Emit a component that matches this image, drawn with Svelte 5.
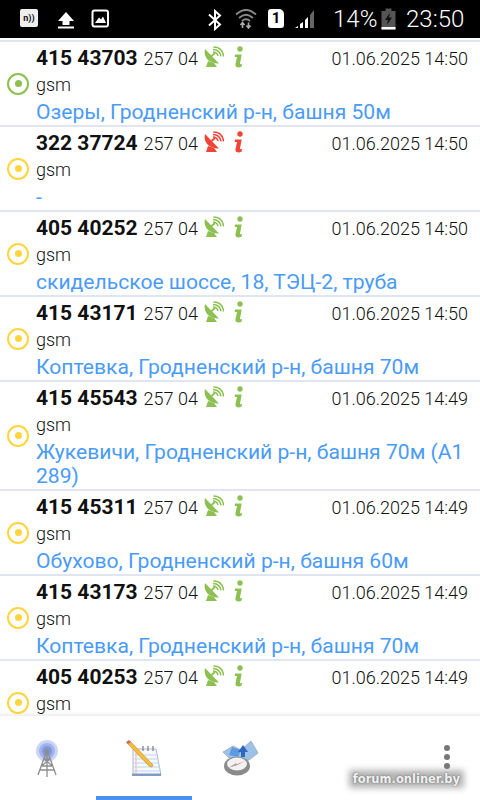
<script>
  const rows = [
    { id: '415 43703', time: '14:50', place: 'Озеры, Гродненский р-н, башня 50м', active: true },
    { id: '322 37724', time: '14:50', place: '-', bad: true },
    { id: '405 40252', time: '14:50', place: 'скидельское шоссе, 18, ТЭЦ-2, труба' },
    { id: '415 43171', time: '14:50', place: 'Коптевка, Гродненский р-н, башня 70м' },
    { id: '415 45543', time: '14:49', place: 'Жукевичи, Гродненский р-н, башня 70м (А1 289)' },
    { id: '415 45311', time: '14:49', place: 'Обухово, Гродненский р-н, башня 60м' },
    { id: '415 43173', time: '14:49', place: 'Коптевка, Гродненский р-н, башня 70м' },
    { id: '405 40253', time: '14:49', place: '' }
  ];
</script>

<div class="screen">
  <header class="status">
    <div class="nfc">n))</div>
    <svg class="ic" width="20" height="20" viewBox="0 0 20 20" style="left:56px;top:10px"><path d="M10 2 L2 11 H6.5 V15 H13.5 V11 H18 Z M2 16.5 H18 V18.5 H2 Z" fill="#fff"/></svg>
    <svg class="ic" width="20" height="20" viewBox="0 0 20 20" style="left:91px"><rect x="1.5" y="1.5" width="15.5" height="16" rx="2" fill="none" stroke="#fff" stroke-width="2"/><path d="M4 14 L8 8.5 L10 10.5 L12 7.5 L15 14 Z" fill="#fff"/></svg>
    <svg class="ic" width="16" height="22" viewBox="0 0 16 22" style="left:207px;top:9px"><path d="M2 5.5 L13 15.5 L8 20 V2 L13 6.5 L2 16.5" fill="none" stroke="#fff" stroke-width="2"/></svg>
    <svg class="ic" width="22" height="22" viewBox="0 0 22 22" style="left:235px;top:7px"><path d="M1 7.5 Q11 -1.5 21 7.5 M4 11 Q11 4.5 18 11 M7 14 Q11 10.5 15 14" fill="none" stroke="#8a8a8a" stroke-width="1.8"/><path d="M7.5 21 V16 M5.5 18 L7.5 15.5 L9.5 18 M13.5 15.5 V20.5 M11.5 18.5 L13.5 21 L15.5 18.5" fill="none" stroke="#aaa" stroke-width="1.6"/></svg>
    <div class="sim">1</div>
    <svg class="ic" width="22" height="22" viewBox="0 0 22 22" style="left:294px;top:8px"><path d="M1 20 H4 V18 L1 20 Z" fill="#fff"/><path d="M6 20 H9 V14 L6 16 Z" fill="#fff"/><path d="M11 20 H14 V9 L11 12 Z" fill="#fff"/><path d="M16 20 H20 V2 L16 7 Z" fill="#666"/></svg>
    <span class="pct">14%</span>
    <svg class="ic" width="15" height="22" viewBox="0 0 15 22" style="left:381px;top:8px"><rect x="0.5" y="3" width="14" height="18.5" fill="#555"/><rect x="4.5" y="0.5" width="6" height="3" fill="#555"/><rect x="0.5" y="19" width="14" height="2.5" fill="#fff"/><path d="M9 4.5 L4 12 H7 L6 17 L11 9.5 H8 Z" fill="#111"/></svg>
    <span class="clock">23:50</span>
  </header>

  <main class="list">
    <div class="peek"></div>
    {#each rows as r}
      <section class="row">
        <div class="dot" class:on={r.active}></div>
        <div class="top">
          <b>{r.id}</b>
          <span class="code">257 04</span>
          <svg class="dish" class:red={r.bad} width="20" height="22" viewBox="0 0 20 22">
            <path d="M1 3 C-1 11 5 18 15 17.5 Z" fill="currentColor"/>
            <path d="M4 15 L2 21 H13 L10 17 Z" fill="currentColor"/>
            <path d="M7.5 10 L11 7" stroke="currentColor" stroke-width="1.8"/>
            <path d="M9 6 Q13 6 14 10 M9 3.4 Q16 3.6 17 10.4 M9.4 1 Q18.6 1.2 19.6 10.5" fill="none" stroke="currentColor" stroke-width="1.5"/>
          </svg>
          <svg class="info" class:red={r.bad} width="12" height="22" viewBox="0 0 12 22">
            <circle cx="7" cy="3" r="2.7" fill="currentColor"/>
            <path d="M2 8.5 H8.7 L7 17.5 Q6.8 19 9 17.8 L8.7 20.5 Q6 22 3.5 21 Q2 20.3 2.5 18 L4 11 H1.7 Z" fill="currentColor"/>
          </svg>
          <span class="date">01.06.2025 {r.time}</span>
        </div>
        <div class="type">gsm</div>
        <div class="place">{r.place}</div>
      </section>
    {/each}
  </main>

  <nav class="tabs">
    <div class="tab">
      <svg class="soft" width="26" height="38" viewBox="0 0 26 38">
        <circle cx="12" cy="11" r="11" fill="#ccd6f4"/>
        <circle cx="12" cy="11" r="8" fill="#9fb3ec"/>
        <circle cx="12" cy="11" r="5" fill="#7f97e2"/>
        <circle cx="12" cy="11" r="2.5" fill="#8a8fa8"/>
        <path d="M12 10 L3 35 M12 10 L21 35 M12 10 V37 M6.5 26 L17.5 26 M5 30 L19 30 M9 19 H15 M6.5 26 L15 19 M17.5 26 L9 19" stroke="#8e8e8e" stroke-width="1.3" fill="none"/>
      </svg>
    </div>
    <div class="tab current">
      <svg class="soft" width="38" height="38" viewBox="0 0 38 38">
        <path d="M8 9 L31 9 L36 35 H8 Z" fill="#f6f8fc" stroke="#a8b8d0"/>
        <path d="M9 15 H32 M9 19 H33 M9 23 H34 M9 27 H35 M9 31 H35" stroke="#c2d5ee"/>
        <path d="M11 9 V35" stroke="#f0b8b8"/>
        <path d="M7 33.5 H36 V36 H7 Z" fill="#7e9cc4"/>
        <path d="M18 6 V11 M23 6 V11 M28 6 V11" stroke="#8a8a8a" stroke-width="1.4"/>
        <path d="M2 3 L5 1 L28 25 L27 27 L24 26 Z" fill="#f2bd3a" stroke="#c58a20" stroke-width="0.6"/>
        <path d="M1 2 L4 0 L6 2 L3 4 Z" fill="#d2665a"/>
      </svg>
    </div>
    <div class="tab">
      <svg class="soft" width="38" height="36" viewBox="0 0 38 36">
        <path d="M2 12 L12 6 L20 10 L30 1 L37 13 L28 20 L12 22 Z" fill="#9cc2ea" stroke="#a9b2bf"/>
        <path d="M11 7 L20 10 L17 17 L8 15 Z" fill="#5d9be0"/>
        <path d="M17 12 L22 5 L27 12 L24 12 V17 H20 V12 Z" fill="#2f66c0"/>
        <ellipse cx="16" cy="26" rx="13" ry="9.5" fill="#8b8b8b"/>
        <ellipse cx="16" cy="24" rx="10" ry="6.5" fill="#f2f2f2"/>
        <path d="M8 27.5 L24 21 L16 25 Z" fill="#e2434a"/>
        <path d="M8 27.5 L16 25 L15 23 Z" fill="#aaa"/>
      </svg>
    </div>
    <div class="space"></div>
    <div class="more"><i></i><i></i><i></i></div>
    <div class="mark">forum.onliner.by</div>
  </nav>
</div>

<style>
  :global(body) { margin: 0; background: #fff; }
  .screen {
    width: 480px;
    height: 800px;
    display: flex;
    flex-direction: column;
    overflow: hidden;
    font-family: Roboto, "Liberation Sans", sans-serif;
    color: #111;
  }
  .status {
    position: relative;
    height: 38px;
    flex-shrink: 0;
    background: #000;
    color: #fff;
  }
  .ic { position: absolute; top: 9px; }
  .nfc {
    position: absolute;
    left: 20px;
    top: 9px;
    width: 18px;
    height: 18px;
    background: #eee;
    border-radius: 2px;
    color: #111;
    font-size: 9px;
    font-weight: 700;
    line-height: 18px;
    text-align: center;
  }
  .sim {
    position: absolute;
    left: 268px;
    top: 9px;
    width: 16px;
    height: 19px;
    background: #fff;
    border-radius: 3px 5px 3px 3px;
    color: #000;
    font-size: 15px;
    font-weight: 700;
    line-height: 19px;
    text-align: center;
  }
  .pct {
    position: absolute;
    left: 333px;
    top: 5px;
    font-size: 24px;
    font-weight: 300;
    line-height: 28px;
  }
  .clock {
    position: absolute;
    left: 406px;
    top: 5px;
    font-size: 24px;
    line-height: 28px;
    font-weight: 300;
  }
  .list {
    position: relative;
    flex: 1;
    min-height: 0;
    overflow: hidden;
    background: #fff;
  }
  .list::after {
    content: "";
    position: absolute;
    left: 0;
    right: 0;
    bottom: 0;
    height: 4px;
    background: linear-gradient(rgba(0, 0, 0, 0), rgba(0, 0, 0, 0.07));
  }
  .peek { height: 2px; }
  .row {
    position: relative;
    border-top: 2px solid #dfe5f2;
    padding: 2px 12px 1px 36px;
  }
  .dot {
    position: absolute;
    left: 7px;
    top: 50%;
    margin-top: -11px;
    width: 18px;
    height: 18px;
    border: 2.5px solid #ffd53d;
    border-radius: 50%;
    display: flex;
    align-items: center;
    justify-content: center;
  }
  .dot::after {
    content: "";
    width: 7px;
    height: 7px;
    border-radius: 50%;
    background: #ffd53d;
  }
  .dot.on { border-color: #8cc152; }
  .dot.on::after { background: #8cc152; }
  .top {
    display: flex;
    align-items: center;
    height: 28px;
  }
  b { font-size: 21px; font-weight: 700; }
  .code { font-size: 18px; font-weight: 300; margin-left: 6px; }
  .dish { color: #8cc152; margin-left: 6px; margin-top: -3px; }
  .info { color: #8cc152; margin-left: 9px; margin-top: -3px; }
  .red { color: #f04438; }
  .date { margin-left: auto; font-size: 18px; font-weight: 300; }
  .type { font-size: 18px; font-weight: 300; line-height: 25px; }
  .place {
    margin-top: 3px;
    font-size: 21.1px;
    line-height: 24px;
    min-height: 24px;
    color: #4a9bf8;
  }
  .tabs {
    position: relative;
    z-index: 0;
    height: 84px;
    flex-shrink: 0;
    display: flex;
    background: #fff;
  }
  .tab {
    width: 96px;
    box-sizing: border-box;
    display: flex;
    justify-content: center;
    padding-top: 24px;
    border-bottom: 4px solid transparent;
  }
  .current { border-bottom-color: #4a90ee; }
  .soft { filter: blur(0.4px); }
  .space { flex: 1; }
  .more {
    width: 66px;
    display: flex;
    flex-direction: column;
    align-items: center;
    gap: 3px;
    padding-top: 29px;
  }
  .more i {
    width: 6px;
    height: 6px;
    border-radius: 50%;
    background: #777;
  }
  .mark {
    position: absolute;
    right: 20px;
    bottom: 13px;
    color: #f2f2f2;
    font-family: "DejaVu Sans", sans-serif;
    font-size: 11.5px;
    font-weight: 700;
    line-height: 16px;
    text-shadow: 0 0 2px #555;
  }
  .mark::before {
    content: "";
    position: absolute;
    z-index: -1;
    inset: -1px -4px;
    background: rgba(90, 90, 90, 0.45);
    filter: blur(3px);
  }
</style>
